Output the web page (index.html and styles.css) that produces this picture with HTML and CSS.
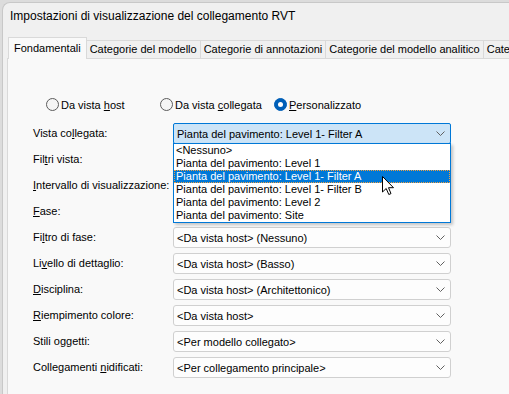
FILE: index.html
```html
<!DOCTYPE html>
<html lang="it">
  <head>
    <meta charset="UTF-8" />
    <meta name="viewport" content="width=device-width, initial-scale=1.0" />
    <title>Impostazioni di visualizzazione del collegamento RVT</title>
    <link rel="stylesheet" href="styles.css">
  </head>
  <body>
    <div class="window">
      <div class="titlebar">Impostazioni di visualizzazione del collegamento RVT</div>
      <div class="dialog">
        <div class="tabs">
          <div class="tab active">Fondamentali</div>
          <div class="tab">Categorie del modello</div>
          <div class="tab">Categorie di annotazioni</div>
          <div class="tab">Categorie del modello analitico</div>
          <div class="tab">Categorie importate</div>
        </div>
        <div class="panel">
          <div class="radios">
            <label class="radio-opt"><span class="radio"></span><span>Da vista <u>h</u>ost</span></label>
            <label class="radio-opt"><span class="radio"></span><span>Da vista <u>c</u>ollegata</span></label>
            <label class="radio-opt"><span class="radio checked"></span><span><u>P</u>ersonalizzato</span></label>
          </div>

          <div class="fields">
            <div class="field-label">Vista co<u>l</u>legata:</div>
            <div class="select open">
              <span>Pianta del pavimento: Level 1- Filter A</span>
              <svg class="chevron" width="9" height="5" viewBox="0 0 9 5"><path d="M0.5 0.5 L4.5 4.5 L8.5 0.5" /></svg>
              <div class="dropdown">
                <div class="dropdown-item">&lt;Nessuno&gt;</div>
                <div class="dropdown-item">Pianta del pavimento: Level 1</div>
                <div class="dropdown-item selected">Pianta del pavimento: Level 1- Filter A</div>
                <div class="dropdown-item">Pianta del pavimento: Level 1- Filter B</div>
                <div class="dropdown-item">Pianta del pavimento: Level 2</div>
                <div class="dropdown-item">Pianta del pavimento: Site</div>
              </div>
            </div>

            <!-- these three boxes sit under the open list -->
            <div class="field-label">Fil<u>t</u>ri vista:</div>
            <div class="select"></div>

            <div class="field-label"><u>I</u>ntervallo di visualizzazione:</div>
            <div class="select"></div>

            <div class="field-label"><u>F</u>ase:</div>
            <div class="select"></div>

            <div class="field-label">Fi<u>l</u>tro di fase:</div>
            <div class="select">
              <span>&lt;Da vista host&gt; (Nessuno)</span>
              <svg class="chevron" width="9" height="5" viewBox="0 0 9 5"><path d="M0.5 0.5 L4.5 4.5 L8.5 0.5" /></svg>
            </div>

            <div class="field-label">Li<u>v</u>ello di dettaglio:</div>
            <div class="select">
              <span>&lt;Da vista host&gt; (Basso)</span>
              <svg class="chevron" width="9" height="5" viewBox="0 0 9 5"><path d="M0.5 0.5 L4.5 4.5 L8.5 0.5" /></svg>
            </div>

            <div class="field-label"><u>D</u>isciplina:</div>
            <div class="select">
              <span>&lt;Da vista host&gt; (Architettonico)</span>
              <svg class="chevron" width="9" height="5" viewBox="0 0 9 5"><path d="M0.5 0.5 L4.5 4.5 L8.5 0.5" /></svg>
            </div>

            <div class="field-label"><u>R</u>iempimento colore:</div>
            <div class="select">
              <span>&lt;Da vista host&gt;</span>
              <svg class="chevron" width="9" height="5" viewBox="0 0 9 5"><path d="M0.5 0.5 L4.5 4.5 L8.5 0.5" /></svg>
            </div>

            <div class="field-label">Stili o<u>g</u>getti:</div>
            <div class="select">
              <span>&lt;Per modello collegato&gt;</span>
              <svg class="chevron" width="9" height="5" viewBox="0 0 9 5"><path d="M0.5 0.5 L4.5 4.5 L8.5 0.5" /></svg>
            </div>

            <div class="field-label">Collegamenti <u>n</u>idificati:</div>
            <div class="select">
              <span>&lt;Per collegamento principale&gt;</span>
              <svg class="chevron" width="9" height="5" viewBox="0 0 9 5"><path d="M0.5 0.5 L4.5 4.5 L8.5 0.5" /></svg>
            </div>
          </div>
        </div>
      </div>
    </div>

    <!-- mouse pointer over the open list -->
    <svg class="cursor" width="13" height="20" viewBox="0 0 13 20">
      <path d="M0.5 0.5 L0.5 16 L4.2 12.5 L6.8 18.5 L9 17.6 L6.5 11.7 L11.5 11.7 Z" />
    </svg>
  </body>
</html>
```

FILE: styles.css
```css
body {
  margin: 0;
  background-color: #dcdcdc;
  font-family: "Liberation Sans", Arial, sans-serif;
  font-size: 11px;
  color: #000;
  height: 394px;
  overflow: hidden;
}
.window {
  margin: 2px 0 0 2px;
  height: 400px;
  background-color: #f0f0f0;
  border-top: 1px solid #c8c8c8;
  border-left: 1px solid #c8c8c8;
  border-top-left-radius: 8px;
  overflow: hidden;
}
.titlebar {
  height: 30px;
  padding-left: 7px;
  font-size: 12px;
  line-height: 26px;
  white-space: nowrap;
}
.dialog {
  padding-left: 4px;
}
.tabs {
  display: flex;
  align-items: flex-end;
  height: 25px;
  margin-left: 1px;
}
.tab {
  height: 17px;
  line-height: 17px;
  padding: 0 3px;
  border: 1px solid #d9d9d9;
  border-left: none;
  border-bottom: none;
  background-color: #f0f0f0;
  white-space: nowrap;
}
.tab.active {
  height: 21px;
  line-height: 20px;
  padding: 0 5px;
  margin-bottom: -1px;
  border-left: 1px solid #d9d9d9;
  background-color: #f9f9f9;
  position: relative;
  z-index: 1;
}
.panel {
  height: 340px;
  padding: 39px 0 0 25px;
  background-color: #f9f9f9;
  border-top: 1px solid #d9d9d9;
  border-left: 1px solid #d9d9d9;
}
.radios {
  display: flex;
  height: 13px;
  margin-left: 13px;
}
.radio-opt {
  width: 114px;
  display: flex;
  align-items: center;
  gap: 2px;
  white-space: nowrap;
}
.radio {
  width: 13px;
  height: 13px;
  box-sizing: border-box;
  border: 1px solid #5c5c5c;
  border-radius: 50%;
  background-color: #f5f5f5;
}
.radio.checked {
  display: flex;
  align-items: center;
  justify-content: center;
  border-color: #005fb8;
  background-color: #005fb8;
}
.radio.checked::after {
  content: "";
  width: 5px;
  height: 5px;
  border-radius: 50%;
  background-color: #fff;
}
.fields {
  display: grid;
  grid-template-columns: 140px 278px;
  grid-auto-rows: 21px;
  row-gap: 5px;
  margin-top: 12px;
}
.field-label {
  line-height: 21px;
  white-space: nowrap;
}
.select {
  position: relative;
  display: flex;
  align-items: center;
  justify-content: space-between;
  box-sizing: border-box;
  padding: 0 5px 0 3px;
  border: 1px solid #d0d0d0;
  border-radius: 3px;
  background-color: #fdfdfd;
  white-space: nowrap;
}
.select.open {
  border-color: #0078d7;
  border-radius: 2px;
  background-color: #cce4f7;
}
.chevron path {
  fill: none;
  stroke: #606060;
  stroke-width: 1;
}
.dropdown {
  position: absolute;
  top: 100%;
  left: -1px;
  right: -1px;
  z-index: 5;
  background-color: #fff;
  border: 1px solid #0078d7;
  box-shadow: 2px 2px 3px rgba(0, 0, 0, 0.22);
}
.dropdown-item {
  height: 13px;
  line-height: 13px;
  padding-left: 2px;
}
.dropdown-item.selected {
  background-color: #0078d7;
  color: #fff;
  outline: 1px dotted #f0a040;
  outline-offset: -1px;
}
u {
  text-underline-offset: 1px;
}
.cursor {
  position: absolute;
  left: 382px;
  top: 176px;
  z-index: 10;
}
.cursor path {
  fill: #fff;
  stroke: #000;
  stroke-width: 1;
  stroke-linejoin: miter;
}
```
